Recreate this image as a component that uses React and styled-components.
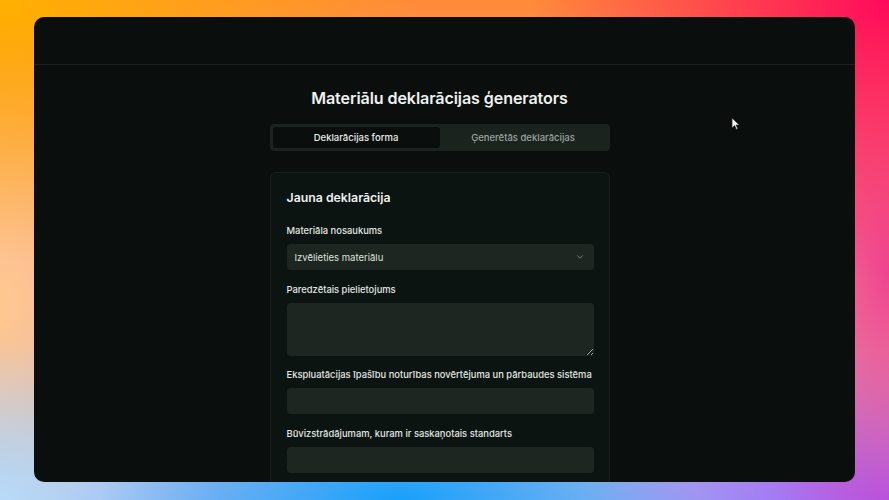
import React from "react";
import styled, { createGlobalStyle } from "styled-components";
import { ChevronDown } from "lucide-react";

const Global = createGlobalStyle`
  html, body { margin: 0; padding: 0; }
  body {
    width: 889px;
    height: 500px;
    overflow: hidden;
    font-family: Inter, "Noto Sans", sans-serif;
  }
  * { box-sizing: border-box; }
`;

const Backdrop = styled.div`
  width: 889px;
  height: 500px;
  padding: 17px 34px 18px;
  background:
    radial-gradient(ellipse 420px 260px at 0% 0%, #ffb000 0%, rgba(255,176,0,0) 100%),
    radial-gradient(ellipse 360px 280px at 100% 0%, #ff0a5c 0%, rgba(255,10,92,0) 100%),
    radial-gradient(ellipse 160px 300px at 100% 55%, #ee4590 0%, rgba(238,69,144,0) 100%),
    radial-gradient(ellipse 300px 150px at 100% 100%, #a855f7 0%, rgba(168,85,247,0) 100%),
    radial-gradient(ellipse 300px 120px at 45% 100%, #18a0fa 0%, rgba(24,160,250,0) 100%),
    radial-gradient(ellipse 220px 160px at 0% 100%, #b8daf8 0%, rgba(184,218,248,0) 100%),
    radial-gradient(ellipse 140px 260px at 0% 60%, #ffc890 0%, rgba(255,200,144,0) 100%),
    linear-gradient(to bottom, #ff8a3a 0%, #f5b0a0 60%, #9ab8f0 100%);
`;

const Window = styled.div`
  position: relative;
  width: 100%;
  height: 100%;
  background: #0a0f0d;
  border-radius: 10px;
  overflow: hidden;
  display: flex;
  flex-direction: column;
`;

const TopBar = styled.div`
  height: 48px;
  flex-shrink: 0;
  border-bottom: 1px solid #1a211e;
`;

const Main = styled.main`
  display: flex;
  flex-direction: column;
  align-items: center;
  padding: 21px 10px 0 0;
`;

const Title = styled.h1`
  margin: 0;
  font-size: 16.1px;
  line-height: 24px;
  font-weight: 600;
  color: #eef1ef;
  letter-spacing: -0.1px;
`;

const Tabs = styled.div`
  margin-top: 14px;
  width: 340px;
  height: 27px;
  padding: 3px;
  border-radius: 4px;
  background: #1b231f;
  display: grid;
  grid-template-columns: 1fr 1fr;
`;

const Tab = styled.div`
  display: flex;
  align-items: center;
  justify-content: center;
  border-radius: 3px;
  font-size: 9.5px;
  font-weight: 500;
  color: ${(p) => (p.$active ? "#e9ecea" : "#9aa39e")};
  background: ${(p) => (p.$active ? "#0a0f0d" : "transparent")};
`;

const Card = styled.section`
  margin-top: 21px;
  width: 340px;
  border: 1px solid #18201c;
  border-radius: 6px;
  background: #0c1411;
  padding: 16px 15px 16px 16px;
  display: flex;
  flex-direction: column;
  gap: 13px;
`;

const CardTitle = styled.h2`
  margin: 0 0 4px;
  font-size: 12.3px;
  line-height: 18px;
  font-weight: 600;
  color: #eef1ef;
`;

const Field = styled.div`
  display: flex;
  flex-direction: column;
  gap: 6px;
`;

const Label = styled.label`
  font-size: 9.4px;
  line-height: 14px;
  font-weight: 500;
  color: #e3e7e4;
  white-space: nowrap;
`;

const controlBase = `
  width: 100%;
  border: none;
  border-radius: 4px;
  background: #1d2621;
  color: #dde2df;
  font-family: Inter, "Noto Sans", sans-serif;
  font-size: 9.5px;
  outline: none;
`;

const Select = styled.div`
  ${controlBase}
  height: 26px;
  padding: 0 9px 0 8px;
  display: flex;
  align-items: center;
  justify-content: space-between;
`;

const Input = styled.input`
  ${controlBase}
  height: 26px;
  padding: 0 8px;
`;

const TextArea = styled.textarea`
  ${controlBase}
  height: 53px;
  padding: 6px 8px;
  resize: vertical;
  display: block;
  margin-bottom: -1px;
`;

const Chevron = styled(ChevronDown)`
  color: #8a938e;
`;

const Pointer = styled.svg`
  position: absolute;
  left: 697px;
  top: 100px;
`;

export default function App() {
  return (
    <>
      <Global />
      <Backdrop>
        <Window>
          <TopBar />
          <Main>
            <Title>Materiālu deklarācijas ģenerators</Title>
            <Tabs>
              <Tab $active>Deklarācijas forma</Tab>
              <Tab>Ģenerētās deklarācijas</Tab>
            </Tabs>
            <Card>
              <CardTitle>Jauna deklarācija</CardTitle>
              <Field>
                <Label>Materiāla nosaukums</Label>
                <Select>
                  <span>Izvēlieties materiālu</span>
                  <Chevron size={10} strokeWidth={2} />
                </Select>
              </Field>
              <Field>
                <Label>Paredzētais pielietojums</Label>
                <TextArea />
              </Field>
              <Field>
                <Label>Ekspluatācijas īpašību noturības novērtējuma un pārbaudes sistēma</Label>
                <Input />
              </Field>
              <Field>
                <Label>Būvizstrādājumam, kuram ir saskaņotais standarts</Label>
                <Input />
              </Field>
            </Card>
          </Main>
          <Pointer width="9" height="13" viewBox="0 0 9 13">
            <path d="M1 1 L1 11 L3.6 8.6 L5.4 12.4 L6.8 11.8 L5.1 8.1 L8.4 8.1 Z" fill="#f4f4f4" stroke="#222" strokeWidth="0.7" strokeLinejoin="round" />
          </Pointer>
        </Window>
      </Backdrop>
    </>
  );
}
